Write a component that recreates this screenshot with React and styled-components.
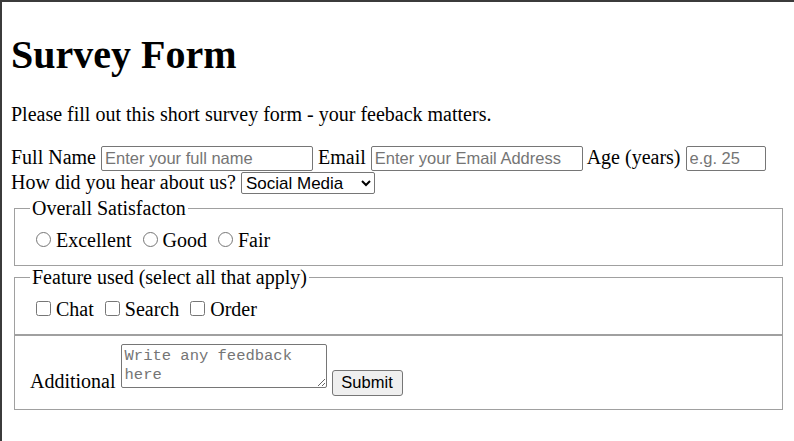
import styled, { createGlobalStyle } from "styled-components";

const Global = createGlobalStyle`
html{
    border-top: 2px solid #3b3b3b;
    border-left: 2px solid #3b3b3b;
    min-height: 100vh;
    box-sizing: border-box;
    background: #fff;
}
body{
    margin: 10px 10px 10px 9px;
    font-family: "Liberation Serif", "Times New Roman", serif;
    font-size: 20px;
    color: #000;
}
`

const Title = styled.h1`
    font-size: 40px;
    font-weight: bold;
    margin: 19px 0 25px;
`

const Intro = styled.p`
    margin: 20px 0;
`

const Row = styled.div`
    line-height: normal;
`

const TextInput = styled.input`
    width: ${(p) => p.w}px;
    height: 25px;
    box-sizing: border-box;
    padding: 1px 3px;
    border: 1px solid #767676;
    border-radius: 2px;
    font-family: "Liberation Sans", Arial, sans-serif;
    font-size: 16.5px;
    margin: 0;
    &::placeholder{
        color: #757575;
    }
`

const Select = styled.select`
    width: 134px;
    height: 22px;
    font-family: "Liberation Sans", Arial, sans-serif;
    font-size: 17px;
    border: 1px solid #767676;
    border-radius: 2px;
    background: #fff;
    color: #000;
    margin: 1px 0 3px;
`

const Group = styled.fieldset`
    margin: 0 1px 0 3px;
    padding: 8px 16px 13px 15px;
    border: 1px solid #a0a0a0;
`

const Legend = styled.legend`
    padding: 0 2px;
`

const Choice = styled.label`
    margin-right: 0;
`

const Mark = styled.input`
    width: 15px;
    height: 15px;
    margin: 4px 5px 0 6px;
`

const Feedback = styled.textarea`
    width: 206px;
    height: 44px;
    box-sizing: border-box;
    margin: 0;
    padding: 2px 3px;
    border: 1px solid #767676;
    border-radius: 2px;
    font-family: "Liberation Mono", "Courier New", monospace;
    font-size: 15.5px;
    line-height: 19px;
    vertical-align: baseline;
    &::placeholder{
        color: #757575;
    }
`

const Button = styled.button`
    width: 71px;
    height: 26px;
    margin: 0;
    padding: 1px 7px;
    background: #efefef;
    border: 1px solid #767676;
    border-radius: 3px;
    font-family: "Liberation Sans", Arial, sans-serif;
    font-size: 16.5px;
    color: #000;
`

export default function App() {
    return (
        <>
            <Global />
            <Title>Survey Form</Title>
            <Intro>Please fill out this short survey form - your feeback matters.</Intro>
            <form onSubmit={(e) => e.preventDefault()}>
                <Row>
                    Full Name <TextInput w={212} placeholder="Enter your full name" /> Email{" "}
                    <TextInput w={212} placeholder="Enter your Email Address" /> Age (years){" "}
                    <TextInput w={80} placeholder="e.g. 25" />
                </Row>
                <Row>
                    How did you hear about us?{" "}
                    <Select defaultValue="social">
                        <option value="social">Social Media</option>
                        <option value="friend">Friend</option>
                        <option value="search">Search Engine</option>
                    </Select>
                </Row>
                <Group>
                    <Legend>Overall Satisfacton</Legend>
                    <Choice><Mark type="radio" name="sat" />Excellent</Choice>{" "}
                    <Choice><Mark type="radio" name="sat" />Good</Choice>{" "}
                    <Choice><Mark type="radio" name="sat" />Fair</Choice>
                </Group>
                <Group>
                    <Legend>Feature used (select all that apply)</Legend>
                    <Choice><Mark type="checkbox" />Chat</Choice>{" "}
                    <Choice><Mark type="checkbox" />Search</Choice>{" "}
                    <Choice><Mark type="checkbox" />Order</Choice>
                </Group>
                <Group>
                    Additional <Feedback placeholder="Write any feedback here" />{" "}
                    <Button type="submit">Submit</Button>
                </Group>
            </form>
        </>
    );
}
